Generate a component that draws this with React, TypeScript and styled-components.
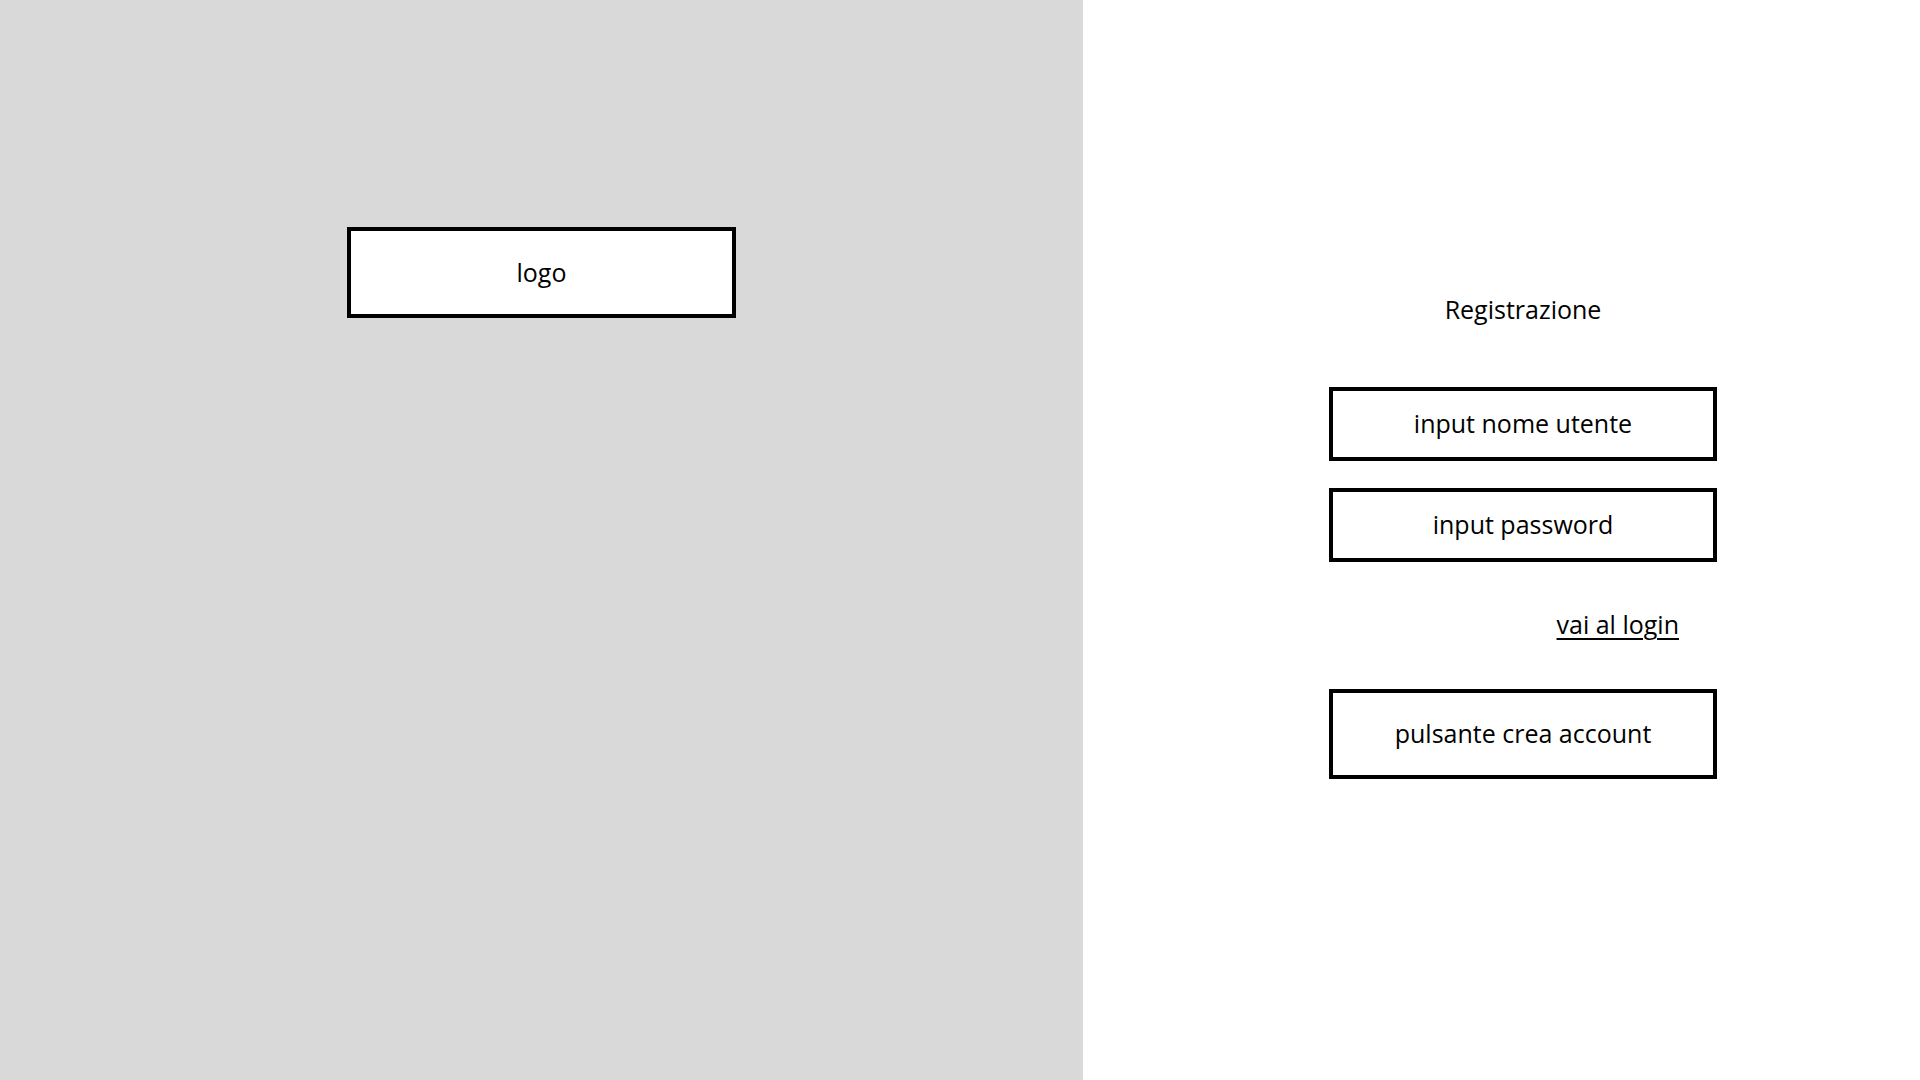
import styled, { createGlobalStyle } from 'styled-components';

const GlobalStyle = createGlobalStyle`
html, body {
  margin: 0;
  padding: 0;
  background: #ffffff;
}
body {
  font-family: "Open Sans", "Liberation Sans", sans-serif;
  color: #000000;
}
`

const Page = styled.div`
display: grid;
grid-template-columns: 1083px 1fr;
width: 1920px;
height: 1080px;
`

const BrandPanel = styled.div`
background-color: #d9d9d9;
display: flex;
flex-direction: column;
align-items: center;
padding-top: 227px;
`

const FormPanel = styled.div`
background-color: #ffffff;
padding-left: 246px;
padding-top: 293px;
`

const Column = styled.div`
width: 388px;
display: flex;
flex-direction: column;
`

const Title = styled.div`
font-size: 25px;
text-align: center;
line-height: 32px;
margin-bottom: 62px;
`

const Box = styled.div`
box-sizing: border-box;
width: ${({ $width }: { $width: number; $height: number }) => $width}px;
height: ${({ $height }) => $height}px;
border: 4px solid #000000;
background-color: #ffffff;
display: flex;
align-items: center;
justify-content: center;
padding-bottom: 2px;
font-size: 25px;
`

const Fields = styled.div`
display: flex;
flex-direction: column;
gap: 27px;
`

const LinkRow = styled.div`
display: flex;
justify-content: flex-end;
padding-right: 38px;
margin-top: 46px;
margin-bottom: 49px;
`

const LoginLink = styled.a`
font-size: 25px;
line-height: 32px;
color: #000000;
text-decoration: underline;
text-underline-offset: 4px;
text-decoration-thickness: 2px;
cursor: pointer;
`

export default function App() {
  return (
    <>
      <GlobalStyle />
      <Page>
        <BrandPanel>
          <Box $width={389} $height={91}>logo</Box>
        </BrandPanel>
        <FormPanel>
          <Column>
            <Title>Registrazione</Title>
            <Fields>
              <Box $width={388} $height={74}>input nome utente</Box>
              <Box $width={388} $height={74}>input password</Box>
            </Fields>
            <LinkRow>
              <LoginLink>vai al login</LoginLink>
            </LinkRow>
            <Box $width={388} $height={90}>pulsante crea account</Box>
          </Column>
        </FormPanel>
      </Page>
    </>
  )
}
